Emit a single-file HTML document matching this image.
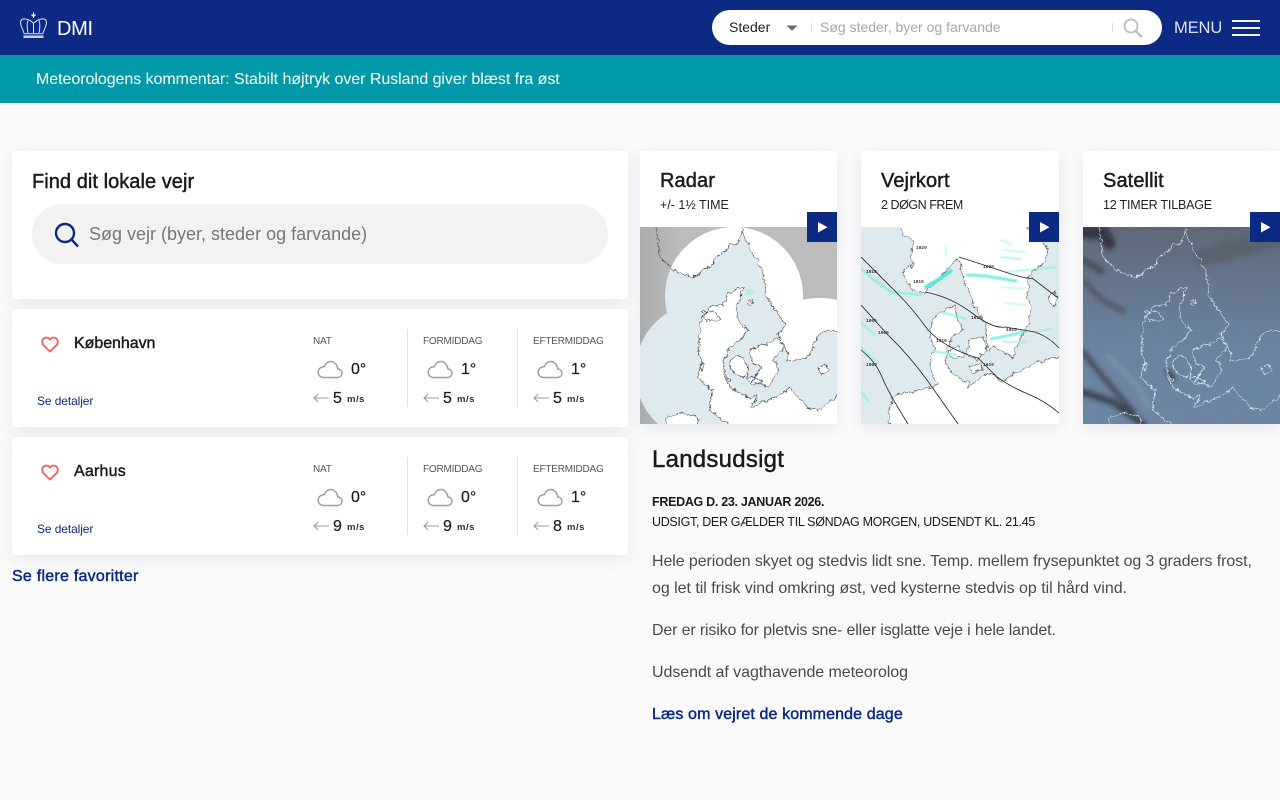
<!DOCTYPE html>
<html lang="da"><head><meta charset="utf-8"><title>DMI</title>
<style>
html,body{margin:0;padding:0;width:1280px;height:800px;overflow:hidden;background:#fafafa;font-family:"Liberation Sans",sans-serif;color:#1a1a1a}
.t{position:absolute;white-space:nowrap;text-decoration:none}
.b{position:absolute}
.m{font-weight:normal;-webkit-text-stroke:.45px currentColor}
.card{position:absolute;background:#fff;box-shadow:0 4px 16px rgba(30,40,120,.08)}
.lab{font-size:10px;line-height:12px;color:#555;letter-spacing:-.2px}
.tmp{font-size:16px;line-height:20px;color:#1a1a1a;-webkit-text-stroke:.2px #1a1a1a}
.ws{font-size:16px;line-height:20px;color:#1a1a1a;-webkit-text-stroke:.2px #1a1a1a}
.ms{font-size:9.5px;line-height:12px;color:#333;font-weight:bold;letter-spacing:.5px}
.dv{position:absolute;width:1px;height:78px;background:#e4e4e4}
.h{font-size:20px;line-height:26px;letter-spacing:.1px}
.s{font-size:12.5px;line-height:16px;color:#222}
.p{font-size:16px;line-height:24px;color:#4a4a4a}
.sd{font-size:12px;line-height:14px;color:#0c2a82}
svg{position:absolute;display:block;overflow:hidden}
</style></head><body>
<svg width="0" height="0" style="position:absolute">
<defs>
<filter id="jag" x="-5%" y="-5%" width="110%" height="110%"><feTurbulence type="fractalNoise" baseFrequency=".2" numOctaves="3" seed="7" result="n"/><feDisplacementMap in="SourceGraphic" in2="n" scale="6" xChannelSelector="R" yChannelSelector="G"/></filter>
<symbol id="cloud" viewBox="0 0 26 20"><path d="M6.500 18.500H20.500C23 18.500 25 16.600 25 14.200C25 11.900 23.200 10.100 20.900 10C20.500 6.200 17.600 2.500 13.800 2.500C10.700 2.500 8.200 4.600 7.400 7.600C4 7.600 1.200 10 1.200 13.200C1.200 16.200 3.500 18.500 6.500 18.500Z" fill="none" stroke="#98a0a8" stroke-width="1.500"/></symbol>
<symbol id="arr" viewBox="0 0 16 10"><path d="M16 5H1M5 1.200L1 5L5 8.800" fill="none" stroke="#9a9fa5" stroke-width="1.100"/></symbol>
<symbol id="heart" viewBox="0 0 18 17"><path d="M9 15.500L2.600 9.200C.600 7.200.700 4.200 2.600 2.600C4.500 1 7.400 1.300 9 3.600C10.600 1.300 13.500 1 15.400 2.600C17.300 4.200 17.400 7.200 15.400 9.200Z" fill="none" stroke="#f55a5f" stroke-width="1.800"/></symbol>
<g id="dkland">
<path d="M17 -15L17 6L16 12L19 14L18 22L22 33L30 39L37 45L43 48L50 50L57 49L63 43L70 40L77 30L84 25L90 18L96 17L100 13L102 3L105 11L109 18L113 30L117 33L122 46L125 56L127 70L132 78L140 90L145 97L143 103L138 106L141 115L147 123L148 133L157 133L167 131L171 126L173 120L176 112L180 106L188 103L215 105L215 -15Z"/>
<path d="M103 60L94 64L90 66L86 72L83 78L76 78L70 80L66 84L62 90L60 98L62 104L58 110L60 118L59 124L60 130L63 136L59 142L58 150L65 156L73 163L70 172L70 183L78 190L88 197L95 215L215 215L215 170L197 170L187 176L178 184L167 180L160 172L152 164L150 160L142 166L133 171L123 175L113 180L110 180L115 174L117 168L110 171L102 168L93 163L88 158L87 150L84 143L83 133L88 126L90 120L96 116L100 113L108 103L100 97L97 88L98 80L100 70Z"/>
<path d="M110 123L118 119L127 117L134 113L140 112L143 123L137 127L133 133L137 139L138 146L133 152L128 160L120 158L112 155L117 146L122 140L112 136Z"/>
<path d="M90 133L97 129L103 130L108 140L107 150L97 148L90 141Z"/>
<path d="M178 140L186 137L189 143L184 147L180 145Z"/><path d="M107 152L116 150L122 156L112 158Z"/>
<path d="M27 190L40 186L57 189L62 215L27 215Z"/>
<path d="M63 84L76 86L80 92L70 94L64 92Z"/><path d="M108 74L113 73L112 78L108 78Z"/><path d="M84 148L91 152L88 156Z"/><path d="M60 138L64 138L62 146Z"/>
</g>
</defs>
</svg>

<!-- header -->
<div class="b" style="left:0;top:0;width:1280px;height:55px;background:#0c2a84"></div>
<div class="b" style="left:0;top:55px;width:1280px;height:48px;background:#0099a8"></div>
<svg style="left:19px;top:11px" width="30" height="28" viewBox="0 0 30 28" fill="none" stroke="#dfe4f2" stroke-width="1">
<path d="M14.500 1V7M12 4H17"/><circle cx="14.500" cy="4.500" r="1.300" fill="#fff" stroke="none"/>
<path d="M5 22C3.500 18 1.500 14.500 1.500 11.500C1.500 8.500 4 7.500 6.500 8C10 8.500 12.500 10 14.500 12.500C16.500 10 19 8.500 22.500 8C25 7.500 27.500 8.500 27.500 11.500C27.500 14.500 25.500 18 24 22"/>
<path d="M9 22C8 17 7.500 13 9 9.500M20 22C21 17 21.500 13 20 9.500M14.500 12.500V22"/>
<path d="M4.500 22.800H24.500" stroke-width="1"/>
<rect x="4.500" y="24.500" width="20" height="2.500" fill="#c8cfe6" stroke="none"/>
</svg>
<div class="t" style="left:57px;top:16px;font-size:20px;line-height:26px;color:#fff;letter-spacing:-.3px">DMI</div>
<div class="b" style="left:712px;top:10px;width:450px;height:35px;background:#fff;border-radius:18px"></div>
<div class="t" style="left:729px;top:18px;font-size:14px;line-height:18px;color:#222">Steder</div>
<svg style="left:786px;top:25px" width="12" height="6" viewBox="0 0 12 6"><path d="M0.500 0.500H11.500L6 5.800Z" fill="#666"/></svg>
<div class="b" style="left:811px;top:23px;width:1px;height:9px;background:#ddd"></div>
<div class="b" style="left:1112px;top:23px;width:1px;height:9px;background:#ddd"></div>
<div class="t" style="left:820px;top:18px;font-size:14px;line-height:18px;color:#a8a8a8">Søg steder, byer og farvande</div>
<svg style="left:1122px;top:17px" width="22" height="22" viewBox="0 0 22 22" fill="none" stroke="#bcbcbc"><circle cx="9" cy="9" r="6.500" stroke-width="1.800"/><path d="M13.500 13.800L20 20.300" stroke-width="2.200"/></svg>
<div class="t" style="left:1174px;top:18px;font-size:16.500px;line-height:20px;color:#dfe3f0;letter-spacing:-.1px">MENU</div>
<div class="b" style="left:1232px;top:20px;width:28px;height:2px;background:#f2f4fa"></div>
<div class="b" style="left:1232px;top:27px;width:28px;height:2px;background:#f2f4fa"></div>
<div class="b" style="left:1232px;top:34px;width:28px;height:2px;background:#f2f4fa"></div>
<div class="t" style="left:36px;top:70px;font-size:16px;line-height:20px;color:#fff;letter-spacing:-.05px">Meteorologens kommentar: Stabilt højtryk over Rusland giver blæst fra øst</div>

<!-- search card -->
<div class="card" style="left:12px;top:151px;width:616px;height:148px"></div>
<div class="t m" style="left:32px;top:169px;font-size:20px;line-height:26px;letter-spacing:.05px">Find dit lokale vejr</div>
<div class="b" style="left:32px;top:204px;width:576px;height:60px;background:#f2f2f2;border-radius:30px"></div>
<svg style="left:54px;top:222px" width="26" height="26" viewBox="0 0 26 26" fill="none" stroke="#0c2a84" stroke-width="2.400"><circle cx="11" cy="11" r="9"/><path d="M17.500 17.500L24 24.500"/></svg>
<div class="t" style="left:89px;top:222px;font-size:18px;line-height:24px;color:#777">Søg vejr (byer, steder og farvande)</div>

<!-- city 1 -->
<div class="card" style="left:12px;top:309px;width:616px;height:118px"></div>
<svg style="left:41px;top:336px" width="18" height="17"><use href="#heart"/></svg>
<div class="t m" style="left:74px;top:334px;font-size:16px;line-height:20px;letter-spacing:-.05px">København</div>
<div class="t sd" style="left:37px;top:394px;letter-spacing:-.1px">Se detaljer</div>
<div class="dv" style="left:407px;top:329px"></div><div class="dv" style="left:517px;top:329px"></div>
<div class="t lab" style="left:313px;top:336px">NAT</div><div class="t lab" style="left:423px;top:336px">FORMIDDAG</div><div class="t lab" style="left:533px;top:336px">EFTERMIDDAG</div>
<svg style="left:317px;top:359px" width="26" height="20"><use href="#cloud"/></svg><svg style="left:427px;top:359px" width="26" height="20"><use href="#cloud"/></svg><svg style="left:537px;top:359px" width="26" height="20"><use href="#cloud"/></svg>
<div class="t tmp" style="left:351px;top:360px">0°</div><div class="t tmp" style="left:461px;top:360px">1°</div><div class="t tmp" style="left:571px;top:360px">1°</div>
<svg style="left:313px;top:393px" width="16" height="10"><use href="#arr"/></svg><svg style="left:423px;top:393px" width="16" height="10"><use href="#arr"/></svg><svg style="left:533px;top:393px" width="16" height="10"><use href="#arr"/></svg>
<div class="t ws" style="left:333px;top:389px">5</div><div class="t ws" style="left:443px;top:389px">5</div><div class="t ws" style="left:553px;top:389px">5</div>
<div class="t ms" style="left:347px;top:394px">m/s</div><div class="t ms" style="left:457px;top:394px">m/s</div><div class="t ms" style="left:567px;top:394px">m/s</div>

<!-- city 2 -->
<div class="card" style="left:12px;top:437px;width:616px;height:118px"></div>
<svg style="left:41px;top:464px" width="18" height="17"><use href="#heart"/></svg>
<div class="t m" style="left:74px;top:462px;font-size:16px;line-height:20px;letter-spacing:.2px">Aarhus</div>
<div class="t sd" style="left:37px;top:522px;letter-spacing:-.1px">Se detaljer</div>
<div class="dv" style="left:407px;top:457px"></div><div class="dv" style="left:517px;top:457px"></div>
<div class="t lab" style="left:313px;top:464px">NAT</div><div class="t lab" style="left:423px;top:464px">FORMIDDAG</div><div class="t lab" style="left:533px;top:464px">EFTERMIDDAG</div>
<svg style="left:317px;top:487px" width="26" height="20"><use href="#cloud"/></svg><svg style="left:427px;top:487px" width="26" height="20"><use href="#cloud"/></svg><svg style="left:537px;top:487px" width="26" height="20"><use href="#cloud"/></svg>
<div class="t tmp" style="left:351px;top:488px">0°</div><div class="t tmp" style="left:461px;top:488px">0°</div><div class="t tmp" style="left:571px;top:488px">1°</div>
<svg style="left:313px;top:521px" width="16" height="10"><use href="#arr"/></svg><svg style="left:423px;top:521px" width="16" height="10"><use href="#arr"/></svg><svg style="left:533px;top:521px" width="16" height="10"><use href="#arr"/></svg>
<div class="t ws" style="left:333px;top:517px">9</div><div class="t ws" style="left:443px;top:517px">9</div><div class="t ws" style="left:553px;top:517px">8</div>
<div class="t ms" style="left:347px;top:522px">m/s</div><div class="t ms" style="left:457px;top:522px">m/s</div><div class="t ms" style="left:567px;top:522px">m/s</div>
<div class="t m" style="left:12px;top:567px;font-size:16px;line-height:20px;color:#0c2a84;letter-spacing:.25px">Se flere favoritter</div>

<!-- Radar -->
<div class="card" style="left:640px;top:151px;width:197px;height:273px"></div>
<div class="t h m" style="left:660px;top:168px">Radar</div>
<div class="t s" style="left:660px;top:197px">+/- 1½ TIME</div>
<svg style="left:640px;top:227px" width="197" height="197" viewBox="0 0 197 197">
<defs><clipPath id="rc"><circle cx="94" cy="69" r="69"/><circle cx="65" cy="145" r="70"/><circle cx="180" cy="150" r="79"/><rect x="100" y="110" width="97" height="87"/></clipPath>
<linearGradient id="rg"><stop offset="0" stop-color="#a9abac"/><stop offset="1" stop-color="#bcbcbc"/></linearGradient></defs>
<rect width="197" height="197" fill="#bcbcbc"/><rect width="40" height="197" fill="url(#rg)"/>
<g clip-path="url(#rc)"><rect width="197" height="197" fill="#dfeaee"/><use href="#dkland" fill="#fff" filter="url(#jag)"/></g>
<use href="#dkland" fill="none" stroke="#4a4e52" stroke-width=".7" filter="url(#jag)"/>
<rect x="106" y="62" width="8" height="6" fill="#a8efe6" opacity=".7"/>
</svg>
<div class="b" style="left:807px;top:212px;width:30px;height:30px;background:#0c2a84"></div>
<svg style="left:818px;top:222px" width="10" height="11"><path d="M0 0L9.500 5.200L0 10.500Z" fill="#fff"/></svg>

<!-- Vejrkort -->
<div class="card" style="left:861px;top:151px;width:198px;height:273px"></div>
<div class="t h m" style="left:881px;top:168px">Vejrkort</div>
<div class="t s" style="left:881px;top:197px;letter-spacing:-.45px">2 DØGN FREM</div>
<svg style="left:861px;top:227px" width="198" height="197" viewBox="0 0 198 197">
<defs><filter id="sb" x="-10%" y="-50%" width="120%" height="200%"><feGaussianBlur stdDeviation=".7"/></filter></defs>
<rect width="198" height="197" fill="#dfeaee"/>
<g fill="#fff" stroke="#5e6265" stroke-width=".7" filter="url(#jag)">
<path d="M39 -15L42 8L52 14L52 20L49 30L52 36L49 40L41 46L46 54L51 63L64 66L72 58L81 50L90 38L97 31L101 44L104 56L110 68L114 80L120 88L124 96L126 110L126 123L134 120L141 123L147 128L152 130L154 123L160 110L166 100L171 80L166 70L168 60L167 50L175 42L184 36L187 23L180 12L167 3L167 -15Z"/>
<path d="M94 78L84 83L76 88L71 93L70 102L69 110L72 118L74 123L70 130L69 140L73 150L76 156L71 160L51 165L40 166L31 170L28 185L30 215L215 215L215 128L198 130L175 136L160 144L154 146L148 150L141 156L136 150L131 146L120 150L107 160L108 155L104 155L91 146L84 137L86 123L91 110L102 103L96 93Z"/>
<path d="M107 113L122 110L126 123L116 133L104 128L108 120Z"/><path d="M89 123L98 120L103 128L96 132L89 130Z"/><path d="M108 140L118 136L122 142L112 146Z"/>
<path d="M189 66L194 64L196 72L193 80L188 76Z"/></g>
<g fill="none" stroke="#7df0e0" stroke-linecap="round" filter="url(#sb)">
<path d="M65 60L75 54L90 44" stroke="#55e6d4" stroke-width="3.500"/>
<path d="M106 48L125 49L155 54" stroke="#78efdc" stroke-width="3"/>
<path d="M0 42L12 52L30 65L60 68" stroke-width="2"/>
<path d="M130 112L150 108L165 104" stroke="#78efdc" stroke-width="2.500"/>
<path d="M142 115L165 115M175 105L190 102M145 45L195 40M140 30L160 32" stroke-width="1.500" opacity=".8"/>
<path d="M0 120L14 134M0 96L14 108M0 165L8 175M72 124L95 128M80 85L105 92" stroke-width="2" opacity=".8"/>
<path d="M140 13L150 17M142 23L165 25M140 60L165 62M143 76L165 78M85 18L85 28" stroke-width="1.300" opacity=".6"/>
</g>
<g fill="none" stroke="#222" stroke-width=".8">
<path d="M98 30Q120 37 144 45T171 51L197 71"/>
<path d="M64 65Q90 70 111 86T144 100L174 105Q188 110 198 121"/>
<path d="M0 30Q20 50 36 66T67 103Q85 122 117 131L136 150Q150 160 167 167T198 186"/>
<path d="M0 78L27 108Q50 130 71 160T97 197"/>
<path d="M0 123Q15 135 21 150T47 197"/>
</g>
<g font-family="Liberation Mono,monospace" font-size="4.500" font-weight="bold" fill="#333">
<text x="5" y="46">1010</text><text x="5" y="95">1005</text><text x="17" y="107">1005</text><text x="5" y="139">1000</text><text x="52" y="56">1015</text><text x="55" y="22">1020</text><text x="122" y="41">1020</text><text x="110" y="92">1015</text><text x="145" y="104">1015</text><text x="75" y="115">1010</text><text x="122" y="139">1010</text>
</g>
</svg>
<div class="b" style="left:1029px;top:212px;width:30px;height:30px;background:#0c2a84"></div>
<svg style="left:1040px;top:222px" width="10" height="11"><path d="M0 0L9.500 5.200L0 10.500Z" fill="#fff"/></svg>

<!-- Satellit -->
<div class="card" style="left:1083px;top:151px;width:197px;height:273px"></div>
<div class="t h m" style="left:1103px;top:168px">Satellit</div>
<div class="t s" style="left:1103px;top:197px;letter-spacing:-.2px">12 TIMER TILBAGE</div>
<svg style="left:1083px;top:227px" width="197" height="197" viewBox="0 0 197 197">
<defs>
<linearGradient id="sg" x1="0" y1="0" x2="0" y2="1"><stop offset="0" stop-color="#5a6675"/><stop offset=".3" stop-color="#647690"/><stop offset=".6" stop-color="#6a86a6"/><stop offset="1" stop-color="#6c89aa"/></linearGradient>
<filter id="bl" x="-20%" y="-20%" width="140%" height="140%"><feGaussianBlur stdDeviation="2.500"/></filter>
<filter id="ns" x="0" y="0" width="100%" height="100%"><feTurbulence type="fractalNoise" baseFrequency=".9" numOctaves="2" seed="4"/><feColorMatrix values="0 0 0 0 .15 0 0 0 0 .18 0 0 0 0 .22 0 0 0 .9 -.28"/></filter>
</defs>
<rect width="197" height="197" fill="url(#sg)"/>
<g filter="url(#bl)" fill="none" stroke-linecap="round">
<path d="M0 5L20 6L26 16" stroke="#23262e" stroke-width="13" opacity=".9"/>
<path d="M0 33L18 44" stroke="#3c4248" stroke-width="7" opacity=".85"/>
<path d="M2 55L18 72L40 84" stroke="#4a4f55" stroke-width="6" opacity=".85"/>
<path d="M120 30L160 20L197 10" stroke="#50565c" stroke-width="18" opacity=".55"/>
<path d="M0 125L20 150L50 185" stroke="#39404a" stroke-width="6" opacity=".85"/>
<path d="M0 165L30 175L60 197" stroke="#2c3038" stroke-width="7" opacity=".85"/>
<path d="M25 130L55 160L65 180" stroke="#8fa2b8" stroke-width="6" opacity=".5"/>
<path d="M85 145L90 152" stroke="#222" stroke-width="4"/>
</g>
<rect width="197" height="197" filter="url(#ns)"/>
<use href="#dkland" fill="none" stroke="#e4eaf0" stroke-width=".7" filter="url(#jag)"/>
</svg>
<div class="b" style="left:1250px;top:212px;width:30px;height:30px;background:#0c2a84"></div>
<svg style="left:1261px;top:222px" width="10" height="11"><path d="M0 0L9.500 5.200L0 10.500Z" fill="#fff"/></svg>

<!-- Landsudsigt -->
<div class="t m" style="left:652px;top:445px;font-size:24px;line-height:30px;letter-spacing:.25px;color:#1a1a1a">Landsudsigt</div>
<div class="t" style="left:652px;top:494px;font-size:12.500px;line-height:16px;font-weight:bold;letter-spacing:-.3px;color:#1a1a1a">FREDAG D. 23. JANUAR 2026.</div>
<div class="t" style="left:652px;top:514px;font-size:12.500px;line-height:16px;color:#1a1a1a;letter-spacing:-.32px">UDSIGT, DER GÆLDER TIL SØNDAG MORGEN, UDSENDT KL. 21.45</div>
<div class="t p" style="left:652px;top:550px;letter-spacing:-.085px">Hele perioden skyet og stedvis lidt sne. Temp. mellem frysepunktet og 3 graders frost,</div>
<div class="t p" style="left:652px;top:577px;letter-spacing:-.035px">og let til frisk vind omkring øst, ved kysterne stedvis op til hård vind.</div>
<div class="t p" style="left:652px;top:619px;letter-spacing:-.15px">Der er risiko for pletvis sne- eller isglatte veje i hele landet.</div>
<div class="t p" style="left:652px;top:661px;letter-spacing:-.06px">Udsendt af vagthavende meteorolog</div>
<div class="t m" style="left:652px;top:703px;font-size:16px;line-height:24px;color:#0c2a84;letter-spacing:.12px">Læs om vejret de kommende dage</div>
</body></html>
